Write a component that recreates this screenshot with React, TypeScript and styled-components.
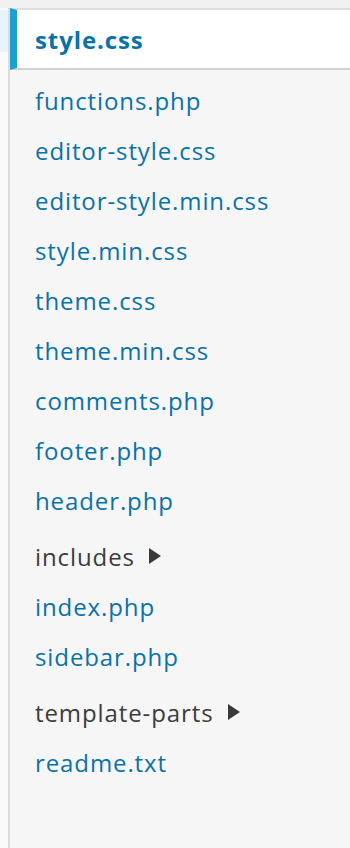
import React from "react";
import styled, { createGlobalStyle } from "styled-components";

const Global = createGlobalStyle`
  html, body { margin: 0; padding: 0; }
  body {
    width: 350px;
    height: 848px;
    overflow: hidden;
    background: #f6f6f6;
    font-family: "Open Sans", "Noto Sans", Arial, sans-serif;
  }
`;

const Page = styled.div`
  display: grid;
  grid-template-columns: 8px 1fr;
  grid-template-rows: 8px 1fr;
  width: 350px;
  height: 848px;
`;

const TopBar = styled.div`
  grid-column: 1 / 3;
  background: #f0f0f0;
`;

const LeftStrip = styled.div`
  display: flex;
  flex-direction: column;
  background: #fafafa;
  padding-top: 2px;
`;

const Highlight = styled.div`
  height: 42px;
  background: #e8f2fb;
`;

const Panel = styled.ul`
  list-style: none;
  margin: 0;
  padding: 0;
  border-left: 2px solid #dcdcdc;
  background: #f6f6f6;
  display: flex;
  flex-direction: column;
`;

const CurrentItem = styled.li`
  display: flex;
  align-items: center;
  box-sizing: border-box;
  height: 62px;
  background: #fff;
  border-top: 2px solid #dedede;
  border-bottom: 2px solid #d2d2d2;
  border-left: 7px solid #1ea0d0;
  padding-left: 18px;
  margin-bottom: 5px;
`;

const Item = styled.li<{ $folder?: boolean }>`
  display: flex;
  align-items: center;
  height: 50px;
  padding-left: 25px;
  margin-top: ${(p) => (p.$folder ? "6px" : "0")};
`;

const FileLink = styled.span<{ $bold?: boolean }>`
  color: #0a72a8;
  font-size: 24px;
  font-weight: ${(p) => (p.$bold ? 700 : 400)};
  letter-spacing: 0.9px;
`;

const FolderLabel = styled.span`
  display: flex;
  align-items: center;
  gap: 14px;
  color: #3c3c3c;
  font-size: 24px;
  letter-spacing: 0.9px;
`;

const Arrow = styled.span`
  width: 0;
  height: 0;
  border-top: 8px solid transparent;
  border-bottom: 8px solid transparent;
  border-left: 12px solid #3a3a3a;
`;

const files: { name: string; folder?: boolean }[] = [
  { name: "functions.php" },
  { name: "editor-style.css" },
  { name: "editor-style.min.css" },
  { name: "style.min.css" },
  { name: "theme.css" },
  { name: "theme.min.css" },
  { name: "comments.php" },
  { name: "footer.php" },
  { name: "header.php" },
  { name: "includes", folder: true },
  { name: "index.php" },
  { name: "sidebar.php" },
  { name: "template-parts", folder: true },
  { name: "readme.txt" },
];

export default function App() {
  return (
    <>
      <Global />
      <Page>
        <TopBar />
        <LeftStrip>
          <Highlight />
        </LeftStrip>
        <Panel>
          <CurrentItem>
            <FileLink $bold>style.css</FileLink>
          </CurrentItem>
          {files.map((f) =>
            f.folder ? (
              <Item key={f.name} $folder>
                <FolderLabel>
                  {f.name}
                  <Arrow />
                </FolderLabel>
              </Item>
            ) : (
              <Item key={f.name}>
                <FileLink>{f.name}</FileLink>
              </Item>
            )
          )}
        </Panel>
      </Page>
    </>
  );
}
